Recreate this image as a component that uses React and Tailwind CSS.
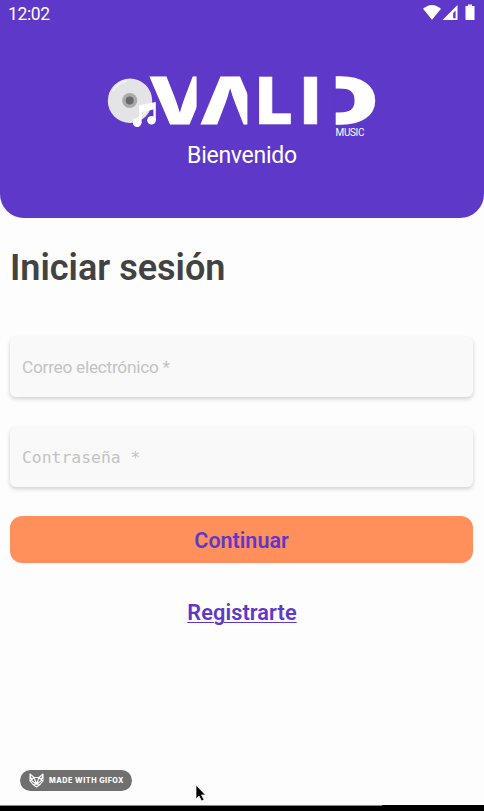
import React from "react";

function StatusBar() {
  return (
    <div className="flex h-7 items-start justify-between pl-2 pr-[8px] text-white">
      <span className="pt-[4px] text-[17.5px] leading-5 tracking-[-0.35px]">12:02</span>
      <svg width="54" height="17" viewBox="0 0 54 17" className="mt-[4px]" fill="#fff">
        <path d="M1 4.8Q10 -3 19 4.8L10 15.8Z" />
        <path fillRule="evenodd" d="M35.5 1V16H20.5ZM33.6 6.5L31.2 8.9V14.2H33.6Z" />
        <path d="M46 2V.5H50V2H52.5V16H43.5V2Z" />
      </svg>
    </div>
  );
}

function Logo() {
  return (
    <svg width="272" height="68" viewBox="106 72 272 68" role="img" aria-label="VALID music" className="overflow-visible">
      <g fill="#fff" stroke="#fff" className="font-['Inter'] text-[64px] font-black">
        <text x="148.6" y="124" textLength="62" lengthAdjust="spacingAndGlyphs" strokeWidth="1" className="font-extrabold">V</text>
        <rect x="196.6" y="72" width="18" height="56" fill="#5e38c8" stroke="none" />
        <text x="199.4" y="124" textLength="62" lengthAdjust="spacingAndGlyphs" strokeWidth="1" className="font-extrabold">Λ</text>
        <rect x="247.4" y="72" width="18" height="56" fill="#5e38c8" stroke="none" />
        <text x="256.6" y="124" textLength="35.6" lengthAdjust="spacingAndGlyphs" strokeWidth="0.7">L</text>
        <text x="310.5" y="123.7" textLength="66.7" lengthAdjust="spacingAndGlyphs" strokeWidth="1.6">D</text>
        <rect x="306" y="72" width="29.7" height="56" fill="#5e38c8" stroke="none" />
        <text x="301.3" y="124" textLength="18.5" lengthAdjust="spacingAndGlyphs" strokeWidth="0.7">I</text>
      </g>
      <circle cx="130" cy="100.7" r="22.2" fill="#e4e4e6" />
      <path d="M113 91Q118 82 127 81M147 110Q142 118 133 120" stroke="#f5f5f7" strokeWidth="1.5" fill="none" />
      <circle cx="129.7" cy="100.5" r="7.6" fill="#aaa9ac" />
      <circle cx="129.7" cy="100.5" r="4" fill="#68676b" />
      <g fill="#fff">
        <path d="M139.2 105.2L155.8 102V120.2H153.4V109.5L141.6 112V123H139.2Z" />
        <circle cx="137.2" cy="122.8" r="4.3" />
        <circle cx="151.5" cy="120.2" r="4.3" />
      </g>
      <text x="335.5" y="136.3" textLength="29" className="fill-white text-[10px]">MUSIC</text>
    </svg>
  );
}

function GifoxBadge() {
  return (
    <div className="flex h-[21px] w-28 items-center rounded-full bg-[#707070] pl-[9px] text-white">
      <svg width="15" height="15" viewBox="0 0 15 15" fill="none" stroke="#fff" strokeWidth="1.1" strokeLinejoin="round">
        <path d="M1 1L5 4.5H10L14 1L14 8L11 11.5L7.5 14L4 11.5L1 8ZM1 8L5 4.5L7.5 11L10 4.5L14 8M1 2L3 8L7.5 11L12 8L14 2M4 11.5L7.5 11L11 11.5" />
      </svg>
      <span className="ml-[5px] whitespace-nowrap font-['Inter'] text-[7.2px] font-extrabold leading-none tracking-[0.52px]">MADE WITH GIFOX</span>
    </div>
  );
}

export default function App() {
  return (
    <div className="flex h-[811px] w-[484px] flex-col overflow-hidden bg-[#fdfdfd] font-['Roboto',sans-serif]">
      <header className="h-[218px] shrink-0 rounded-b-[24px] bg-[#5e38c8]">
        <StatusBar />
        <div className="flex flex-col items-center pt-11">
          <Logo />
          <p className="mt-0.5 text-[23px] leading-7 tracking-[-0.25px] text-white">Bienvenido</p>
        </div>
      </header>
      <main className="flex flex-1 flex-col px-[10px]">
        <h1 className="mt-[29px] text-[36px] font-semibold leading-[42px] text-[#424242]">Iniciar sesión</h1>
        <input
          placeholder="Correo electrónico *"
          className="mt-12 h-[60px] w-[463px] rounded-md bg-[#f9f9f9] px-3 text-[17.3px] tracking-[-0.27px] shadow-[0_2px_4px_rgba(0,0,0,0.18)] outline-none placeholder:text-[#c3c3c5]"
        />
        <input
          placeholder="Contraseña *"
          className="mt-[30px] h-[60px] w-[463px] rounded-md bg-[#f9f9f9] px-3 font-['DejaVu_Sans_Mono',monospace] text-[16.4px] shadow-[0_2px_4px_rgba(0,0,0,0.18)] outline-none placeholder:text-[#c3c3c5]"
        />
        <button className="mt-[29px] h-[47px] w-[463px] rounded-xl bg-[#ff905c] pt-1 text-[21.5px] font-semibold text-[#5e38c8]">Continuar</button>
        <a className="mt-9 self-center text-[21.7px] font-semibold leading-7 tracking-[0.1px] text-[#5e38c8] underline decoration-1 underline-offset-2">Registrarte</a>
      </main>
      <footer className="flex h-[35px] shrink-0 items-start pl-5">
        <GifoxBadge />
        <svg width="14" height="20" viewBox="0 0 14 20" className="ml-[62px] mt-[14px]">
          <path d="M2 1V15L5 12L7.6 17L10 15.8L7.5 11H11.5Z" fill="#000" stroke="#fff" strokeWidth=".7" />
        </svg>
      </footer>
      <div className="flex h-[6px] shrink-0 bg-black">
        <div className="h-px w-[382px] bg-[#888]" />
      </div>
    </div>
  );
}
